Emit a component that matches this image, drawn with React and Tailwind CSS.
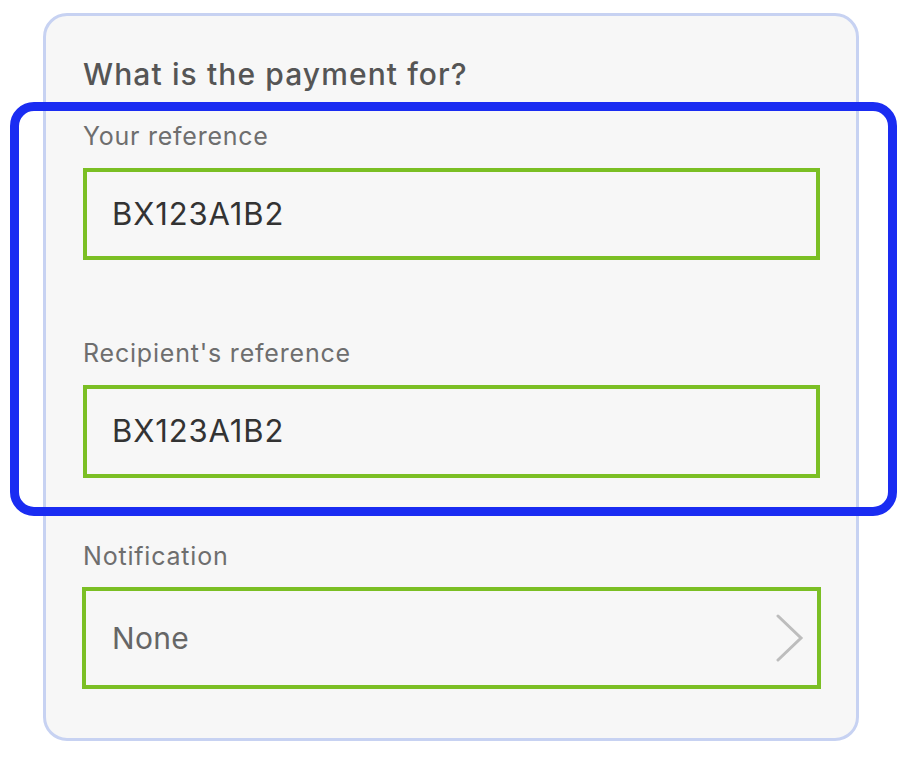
import React from 'react';

const font = { fontFamily: 'Inter, "Noto Sans", sans-serif' };

const Field = ({ value, className }) => (
  <div className={`border-4 border-[#7bbf24] flex items-center pl-[25px] ${className || ''}`}>
    <span className="text-[31px] tracking-[0.9px] text-[#333333]">{value}</span>
  </div>
);

export default function App() {
  return (
    <div className="relative w-[907px] h-[760px] bg-white pt-[13px]" style={font}>
      <div className="ml-[43px] w-[816px] h-[728px] border-[3px] border-[#c7d2f2] rounded-[24px] bg-[#f7f7f7] pl-[37px] pr-[36px] pt-[40px] flex flex-col">
        <h2 className="text-[30px] leading-[36px] font-medium tracking-[1.1px] text-[#555555]">What is the payment for?</h2>

        <div className="mt-[29px] text-[25px] leading-[30px] tracking-[0.75px] text-[#6e6e6e]">Your reference</div>
        <Field value="BX123A1B2" className="mt-[17px] h-[92px]" />

        <div className="mt-[78px] text-[25px] leading-[30px] tracking-[0.8px] text-[#6e6e6e]">Recipient's reference</div>
        <Field value="BX123A1B2" className="mt-[17px] h-[93px]" />

        <div className="mt-[63px] text-[25px] leading-[30px] tracking-[0.8px] text-[#6e6e6e]">Notification</div>
        <div className="mt-[16px] -mx-[1px] h-[102px] border-4 border-[#7bbf24] flex items-center justify-between pl-[26px] pr-[13px]">
          <span className="text-[30px] tracking-[0.3px] text-[#666666]">None</span>
          <svg width="28" height="48" viewBox="0 0 28 48" fill="none">
            <polyline points="2,2 25,24 2,46" stroke="#bdbdbd" strokeWidth="3" strokeLinecap="round" strokeLinejoin="miter" />
          </svg>
        </div>
      </div>

      <div className="absolute left-[10px] top-[102px] w-[887px] h-[414px] border-[9px] border-[#1a2cf2] rounded-[24px]" />
    </div>
  );
}
